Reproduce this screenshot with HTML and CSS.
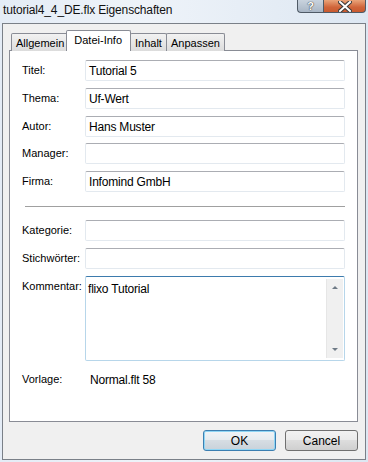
FILE: index.html
```html
<!DOCTYPE html>
<html lang="de">
<head>
  <meta charset="UTF-8" />
  <title>tutorial4_4_DE.flx Eigenschaften</title>
  <link rel="stylesheet" href="styles.css">
</head>
<body>

  <div class="window">
    <div class="titlebar">
      <span class="title">tutorial4_4_DE.flx Eigenschaften</span>
      <div class="caption-buttons">
        <span class="cap-btn help">?</span>
        <span class="cap-btn close">
          <svg width="14" height="11" viewBox="0 0 14 11">
            <path d="M2 1 L12 10 M12 1 L2 10" stroke="#3a3a3a" stroke-width="4" stroke-linecap="square"/>
            <path d="M2 1 L12 10 M12 1 L2 10" stroke="#fff" stroke-width="2" stroke-linecap="square"/>
          </svg>
        </span>
      </div>
    </div>

    <div class="client">
      <div class="tabs">
        <span class="tab">Allgemein</span>
        <span class="tab active">Datei-Info</span>
        <span class="tab">Inhalt</span>
        <span class="tab">Anpassen</span>
      </div>

      <div class="panel">
        <div class="rows">
          <label class="row"><span>Titel:</span><span class="field">Tutorial 5</span></label>
          <label class="row"><span>Thema:</span><span class="field">Uf-Wert</span></label>
          <label class="row"><span>Autor:</span><span class="field">Hans Muster</span></label>
          <label class="row"><span>Manager:</span><span class="field"></span></label>
          <label class="row"><span>Firma:</span><span class="field">Infomind GmbH</span></label>
        </div>

        <hr class="sep">

        <div class="rows">
          <label class="row"><span>Kategorie:</span><span class="field"></span></label>
          <label class="row"><span>Stichwörter:</span><span class="field"></span></label>
          <label class="row memo-row">
            <span>Kommentar:</span>
            <span class="memo">
              <span class="memo-text">flixo Tutorial</span>
              <span class="scrollbar">
                <span class="arrow up"></span>
                <span class="arrow down"></span>
              </span>
            </span>
          </label>
        </div>

        <div class="vorlage">
          <span>Vorlage:</span>
          <span class="vorlage-val">Normal.flt 58</span>
        </div>
      </div>

      <div class="actions">
        <button class="btn default">OK</button>
        <button class="btn">Cancel</button>
      </div>
    </div>
  </div>

</body>
</html>
```

FILE: styles.css
```css
* {
  margin: 0;
  padding: 0;
  box-sizing: border-box;
}
body {
  width: 368px;
  height: 462px;
  overflow: hidden;
  font-family: "Liberation Sans", Arial, sans-serif;
  font-size: 11px;
  color: #000;
  background: linear-gradient(90deg, #e4ecf6 0%, #eef3f9 40%, #dde7f2 100%);
}
.window {
  height: 462px;
  display: flex;
  flex-direction: column;
  padding: 0 2px 2px 2px;
}
.titlebar {
  height: 23px;
  display: flex;
  align-items: flex-start;
  justify-content: space-between;
}
.title {
  font-size: 12px;
  letter-spacing: -0.15px;
  padding: 3px 0 0 1px;
  color: #111;
}
.caption-buttons {
  display: flex;
  margin-right: -2px;
}
.cap-btn {
  height: 13px;
  display: flex;
  align-items: center;
  justify-content: center;
  border: 1px solid #4f5a66;
  border-top: none;
}
.help {
  width: 26px;
  border-radius: 0 0 0 4px;
  border-right: none;
  background: linear-gradient(#c9d3de, #a9b6c5);
  color: #fff;
  font-size: 11px;
  font-weight: bold;
  line-height: 11px;
  text-shadow: 0 0 1px #333, 0 0 1px #333;
}
.close {
  width: 43px;
  border-radius: 0 0 4px 0;
  background: linear-gradient(#e9a47a, #d0653a 60%, #c85a30);
  margin-right: 2px;
}
.client {
  flex: 1;
  background: #f0f0f0;
  border: 1px solid #7a8088;
  display: flex;
  flex-direction: column;
  padding: 6px 7px 0 6px;
}
.tabs {
  display: flex;
  align-items: flex-end;
  height: 21px;
  padding-left: 2px;
  position: relative;
  z-index: 1;
  margin-bottom: -1px;
}
.tab {
  height: 18px;
  padding: 3px 4px 0 4px;
  border: 1px solid #898c95;
  border-bottom: none;
  border-radius: 2px 2px 0 0;
  background: linear-gradient(#f2f2f2, #dcdcdc);
  margin-right: -1px;
  font-size: 11px;
}
.tab.active {
  height: 21px;
  background: #fff;
  margin: 0 -1px 0 -2px;
  padding: 3px 8px 0 7px;
  position: relative;
  z-index: 2;
}
.panel {
  height: 372px;
  background: #fff;
  border: 1px solid #898c95;
  padding: 9px 12px 0 12px;
}
.rows {
  display: flex;
  flex-direction: column;
  gap: 6.75px;
}
.row {
  display: flex;
  align-items: flex-start;
}
.row > span:first-child {
  width: 63px;
  padding-top: 4px;
}
.field {
  width: 260px;
  height: 21px;
  border: 1px solid #e3e9ef;
  border-top-color: #abadb3;
  border-radius: 2px;
  padding: 3px 0 0 3px;
  font-size: 12px;
  letter-spacing: -0.2px;
}
.sep {
  border: none;
  border-top: 1px solid #a0a0a0;
  margin: 14px 0 13px 3px;
  width: 320px;
}
.memo {
  width: 260px;
  height: 85px;
  border: 1px solid #b7d6ea;
  border-top-color: #3d7bad;
  border-radius: 2px;
  display: flex;
  justify-content: space-between;
  padding: 2px 1px 2px 1px;
}
.memo-text {
  font-size: 12px;
  letter-spacing: -0.2px;
  padding: 3px 0 0 1px;
}
.scrollbar {
  width: 17px;
  background: #f0f0f0;
  border-left: 1px solid #e6e6e6;
  display: flex;
  flex-direction: column;
  justify-content: space-between;
  align-items: center;
  padding: 7px 0 7px 0;
}
.arrow {
  width: 0;
  height: 0;
  border-left: 3px solid transparent;
  border-right: 3px solid transparent;
}
.arrow.up {
  border-bottom: 3px solid #6e7a86;
}
.arrow.down {
  border-top: 3px solid #6e7a86;
}
.vorlage {
  display: flex;
  margin-top: 12px;
}
.vorlage > span:first-child {
  width: 68px;
}
.vorlage-val {
  font-size: 12px;
  letter-spacing: -0.2px;
}
.actions {
  display: flex;
  justify-content: flex-end;
  gap: 9px;
  padding: 8px 0 0 0;
}
.btn {
  width: 73px;
  height: 21px;
  border: 1px solid #707070;
  border-radius: 3px;
  background: linear-gradient(#f2f2f2 0%, #ebebeb 45%, #dddddd 50%, #cfcfcf 100%);
  font-family: "Liberation Sans", Arial, sans-serif;
  font-size: 12px;
  color: #000;
}
.btn.default {
  border-color: #3c7fb1;
  box-shadow: inset 0 0 0 1px #8fd6f5;
  background: linear-gradient(#f0f4f7 0%, #e6ecf0 45%, #d6dde3 50%, #c9d2da 100%);
}
```
